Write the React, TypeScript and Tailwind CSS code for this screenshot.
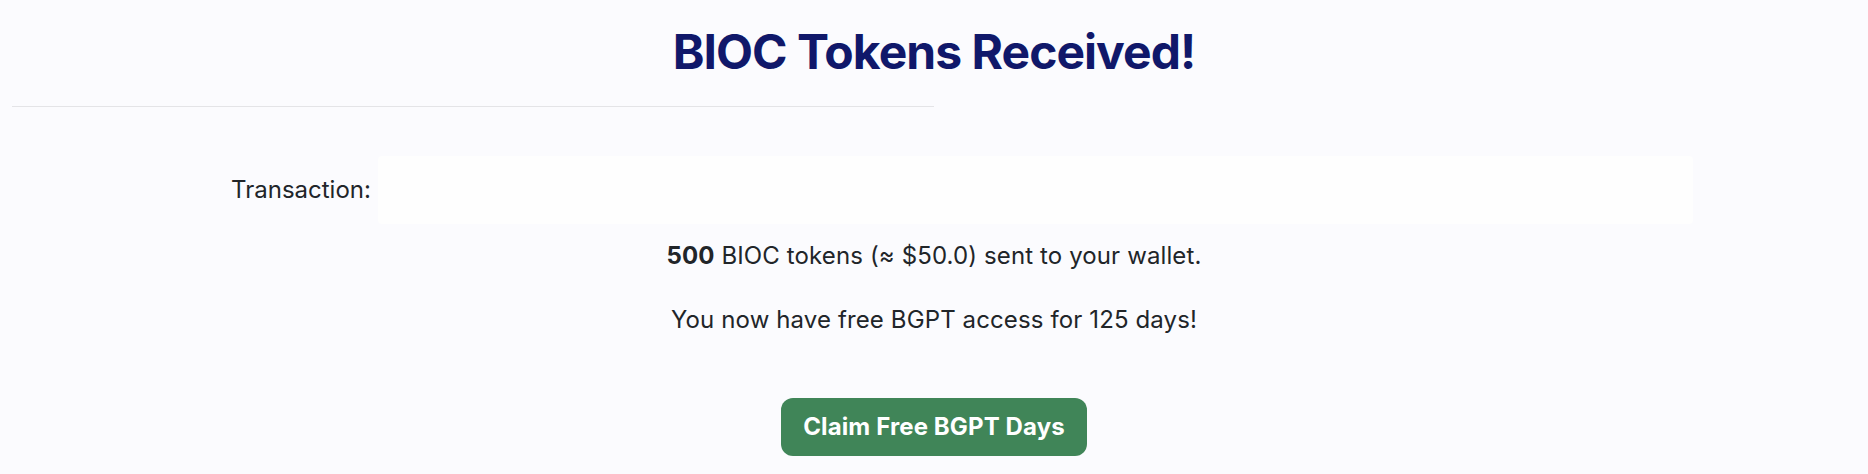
import React from 'react';

const App: React.FC = () => {
  return (
    <div
      className="min-h-[474px] w-full bg-[#fbfbfe] px-3 text-[#212529]"
      style={{ fontFamily: 'Inter, "Noto Sans", sans-serif' }}
    >
      <h1 className="pt-[28px] text-center text-[48px] font-bold leading-[48px] tracking-[-0.02em] text-[#10186a]">
        BIOC Tokens Received!
      </h1>

      <hr className="mt-[30px] w-1/2 border-t border-[#e4e4e7]" />

      <div className="mt-[49px] flex items-center justify-center pl-[56px]">
        <label className="mr-[7px] text-[24px]">Transaction:</label>
        <input
          type="text"
          readOnly
          className="h-[68px] w-[1315px] rounded-[4px] bg-[#fefefe] outline-none"
        />
      </div>

      <p className="mt-[16px] text-center text-[24px] leading-[32px] tracking-[0.005em]">
        <strong className="font-bold">500</strong> BIOC tokens (≈ $50.0) sent to your wallet.
      </p>

      <p className="mt-[32px] text-center text-[24px] leading-[32px] tracking-[0.005em]">
        You now have free BGPT access for 125 days!
      </p>

      <div className="mt-[62px] flex justify-center">
        <button className="h-[58px] rounded-[12px] bg-[#408558] px-[22px] text-[24px] font-bold tracking-[0.005em] text-white">
          Claim Free BGPT Days
        </button>
      </div>
    </div>
  );
};

export default App;
